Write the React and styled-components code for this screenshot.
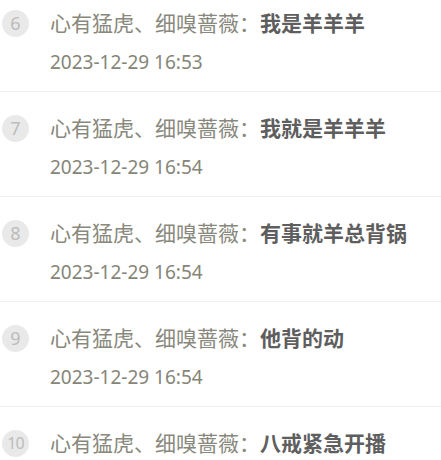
import React from "react";
import styled, { createGlobalStyle } from "styled-components";

const Global = createGlobalStyle`
  html, body { margin: 0; padding: 0; background: #fff; }
  body { font-family: "Noto Sans", "Noto Sans CJK SC", sans-serif; overflow: hidden; }
`;

const List = styled.ul`
  list-style: none;
  margin: -13px 0 0 0;
  padding: 0;
`;

const Row = styled.li`
  display: flex;
  align-items: flex-start;
  padding: 20px 0 14px 0;
  border-bottom: 1px solid #f0f0f0;
`;

const Badge = styled.span`
  flex: 0 0 27px;
  box-sizing: border-box;
  width: 27px;
  min-width: 27px;
  height: 27px;
  margin: 3px 21px 0 2px;
  border-radius: 50%;
  background: #e9e9e9;
  color: #bcbcbc;
  font-family: "Noto Sans", sans-serif;
  font-size: ${(p) => (p.$small ? 16 : 18)}px;
  line-height: 27px;
  text-align: center;
  letter-spacing: ${(p) => (p.$small ? "-1px" : "0")};
`;

const Body = styled.div`
  display: flex;
  flex-direction: column;
  gap: 10px;
`;

const Title = styled.div`
  font-family: "Noto Sans CJK SC", sans-serif;
  font-size: 21px;
  line-height: 30px;
  color: #88887c;
  white-space: nowrap;
`;

const Msg = styled.b`
  font-weight: 700;
  color: #5e5e5e;
`;

const Time = styled.div`
  font-family: "Noto Sans", sans-serif;
  font-size: 19px;
  line-height: 30px;
  color: #858578;
`;

const items = [
  { n: 6, msg: "我是羊羊羊", t: "2023-12-29 16:53" },
  { n: 7, msg: "我就是羊羊羊", t: "2023-12-29 16:54" },
  { n: 8, msg: "有事就羊总背锅", t: "2023-12-29 16:54" },
  { n: 9, msg: "他背的动", t: "2023-12-29 16:54" },
  { n: 10, msg: "八戒紧急开播", t: "2023-12-29 16:54" },
];

export default function App() {
  return (
    <>
      <Global />
      <List>
        {items.map((it) => (
          <Row key={it.n}>
            <Badge $small={it.n >= 10}>{it.n}</Badge>
            <Body>
              <Title>
                心有猛虎、细嗅蔷薇：<Msg>{it.msg}</Msg>
              </Title>
              <Time>{it.t}</Time>
            </Body>
          </Row>
        ))}
      </List>
    </>
  );
}
